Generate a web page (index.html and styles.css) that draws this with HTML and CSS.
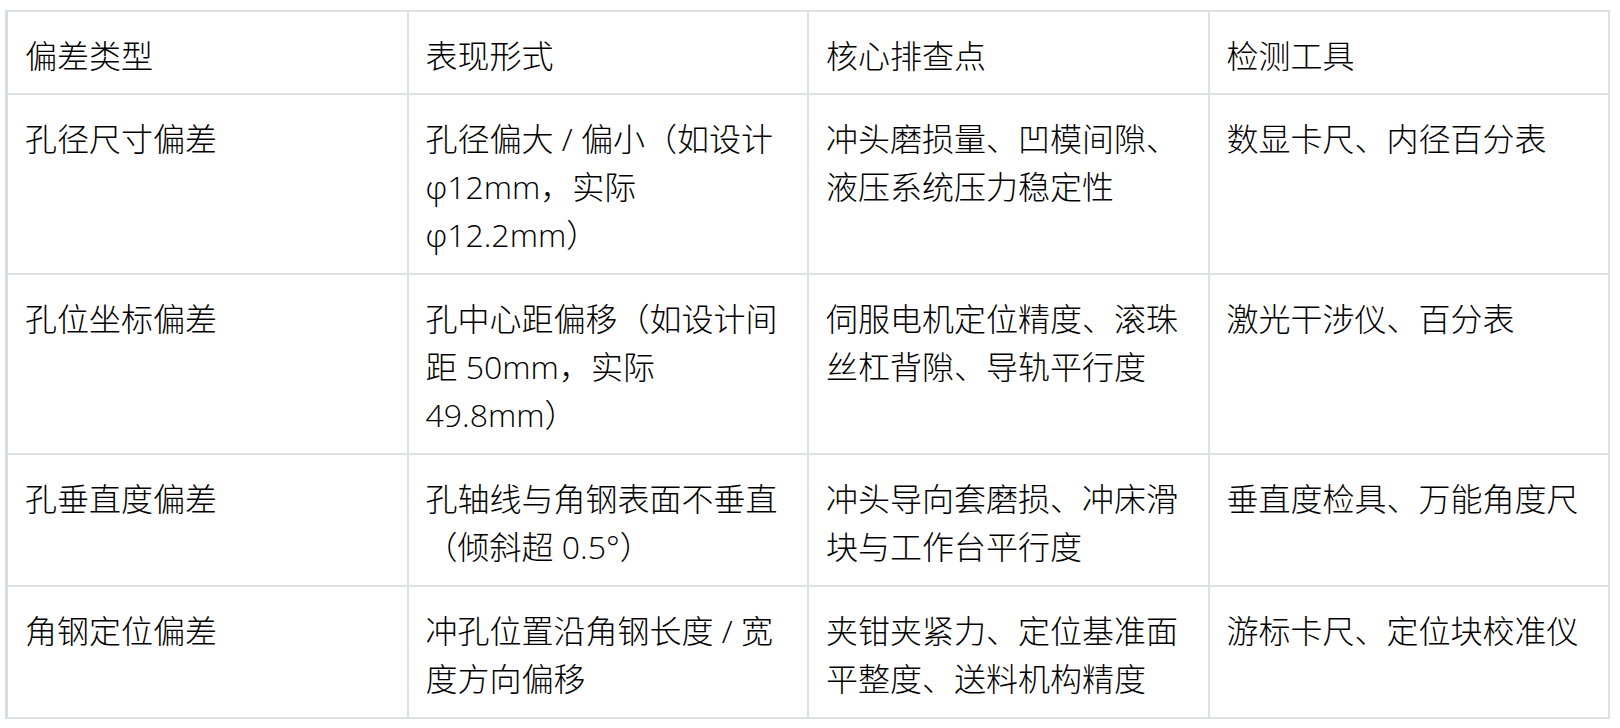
FILE: index.html
```html
<!DOCTYPE html>
<html lang="zh-CN">
<head>
<meta charset="utf-8">
<title>偏差类型</title>
<link rel="stylesheet" href="styles.css">
</head>
<body>
<div class="wrap">
<table class="grid">
  <thead>
    <tr>
      <th>偏差类型</th>
      <th>表现形式</th>
      <th>核心排查点</th>
      <th>检测工具</th>
    </tr>
  </thead>
  <tbody>
    <tr>
      <td>孔径尺寸偏差</td>
      <td>孔径偏大 / 偏小（如设计 φ12mm，实际 φ12.2mm）</td>
      <td>冲头磨损量、凹模间隙、液压系统压力稳定性</td>
      <td>数显卡尺、内径百分表</td>
    </tr>
    <tr>
      <td>孔位坐标偏差</td>
      <td>孔中心距偏移（如设计间距 50mm，实际 49.8mm）</td>
      <td>伺服电机定位精度、滚珠丝杠背隙、导轨平行度</td>
      <td>激光干涉仪、百分表</td>
    </tr>
    <tr>
      <td>孔垂直度偏差</td>
      <td>孔轴线与角钢表面不垂直（倾斜超 0.5°）</td>
      <td>冲头导向套磨损、冲床滑块与工作台平行度</td>
      <td>垂直度检具、万能角度尺</td>
    </tr>
    <tr>
      <td>角钢定位偏差</td>
      <td>冲孔位置沿角钢长度 / 宽度方向偏移</td>
      <td>夹钳夹紧力、定位基准面平整度、送料机构精度</td>
      <td>游标卡尺、定位块校准仪</td>
    </tr>
  </tbody>
</table>
</div>
</body>
</html>
```

FILE: styles.css
```css
html, body {
  margin: 0;
  padding: 0;
  background: #ffffff;
}

.wrap {
  padding: 10px 0 0 5px;
}

.grid {
  width: 1605px;
  table-layout: fixed;
  border-collapse: separate;
  border-spacing: 0;
  border-top: 2px solid #dfe0e4;
  border-left: 3px solid #dadbdf;
  font-family: "Open Sans", "Noto Sans CJK SC", sans-serif;
  font-size: 32px;
  line-height: 48px;
  font-weight: 300;
  color: #000000;
}

.grid th,
.grid td {
  text-align: left;
  vertical-align: top;
  font-weight: 300;
  padding: 20px 17px 14px 17px;
  border-right: 2px solid #dfe0e4;
  border-bottom: 2px solid #dfe0e4;
}

.grid th {
  padding-bottom: 13px;
}
```
